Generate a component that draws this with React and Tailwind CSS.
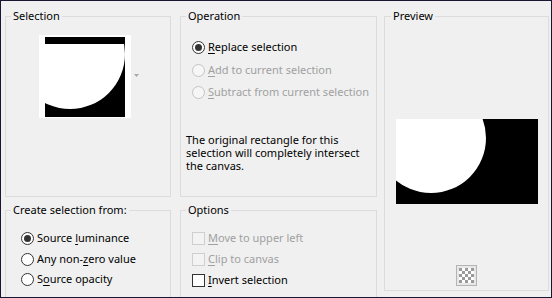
import React from 'react';

const font = { fontFamily: '"Noto Sans", "Open Sans", sans-serif' };

function Group({ label, className = '', legendClass = 'ml-[5px]', children }) {
  return (
    <fieldset className={`border border-[#dcdcdc] min-w-0 shrink-0 ${className}`}>
      <legend className={`${legendClass} px-[2px] h-[16px] leading-[16px] text-black`}>{label}</legend>
      {children}
    </fieldset>
  );
}

function Radio({ checked, disabled, children, className = '' }) {
  return (
    <div className={`flex items-center h-[16px] whitespace-nowrap ${className}`}>
      <span
        className={`w-[13px] h-[13px] rounded-full border flex items-center justify-center shrink-0 ${
          disabled ? 'border-[#c4c4c4] bg-[#f6f6f6]' : 'border-[#333] bg-white'
        }`}
      >
        {checked && <span className="w-[7px] h-[7px] rounded-full bg-[#333]" />}
      </span>
      <span className={`ml-[3px] ${disabled ? 'text-[#a0a0a0]' : 'text-black'}`}>{children}</span>
    </div>
  );
}

function Check({ disabled, children, className = '' }) {
  return (
    <div className={`flex items-center h-[16px] whitespace-nowrap ${className}`}>
      <span
        className={`w-[13px] h-[13px] border shrink-0 ${
          disabled ? 'border-[#cfcfcf] bg-[#f3f3f3]' : 'border-[#333] bg-white'
        }`}
      />
      <span className={`ml-[3px] ${disabled ? 'text-[#a0a0a0]' : 'text-black'}`}>{children}</span>
    </div>
  );
}

const U = ({ children }) => <span className="underline underline-offset-[2px]">{children}</span>;

function Thumbnail() {
  return (
    <div className="flex items-center">
      <div className="bg-white pl-[6px] pr-[6px] pt-[2px] pb-[1px]">
        <svg width="80" height="80" viewBox="0 0 80 80" className="block">
          <rect width="80" height="80" fill="#000" />
          <circle cx="25" cy="17" r="55" fill="#fff" />
          <rect width="80" height="7" fill="#000" />
        </svg>
      </div>
      <svg width="5" height="3" viewBox="0 0 5 3" className="ml-[3px] mt-[-3px]">
        <path d="M0 0h5L2.5 3z" fill="#a8a8a8" />
      </svg>
    </div>
  );
}

function PreviewImage() {
  return (
    <svg width="142" height="85" viewBox="0 0 142 85" className="block">
      <rect width="142" height="85" fill="#000" />
      <circle cx="35" cy="19" r="55" fill="#fff" />
    </svg>
  );
}

function CheckerIcon() {
  const cells = [];
  for (let r = 0; r < 5; r++) {
    for (let c = 0; c < 5; c++) {
      if ((r + c) % 2 === 0) cells.push(<rect key={`${r}-${c}`} x={3 + c * 3} y={3 + r * 3} width="3" height="3" fill="#9a9a9a" />);
    }
  }
  return (
    <svg width="21" height="21" viewBox="0 0 21 21" className="block">
      <rect x="0.5" y="0.5" width="20" height="20" fill="#e8e8e8" stroke="#b4b4b4" />
      <rect x="3" y="3" width="15" height="15" fill="#fff" />
      {cells}
    </svg>
  );
}

export default function App() {
  return (
    <div
      className="w-[552px] h-[298px] overflow-hidden border border-[#1b1535] bg-[#f0f0f0] text-[11px] flex items-start pl-[4px] pt-[7px]"
      style={font}
    >
      <div className="w-[166px] flex flex-col shrink-0">
        <Group label="Selection" className="h-[189px]">
          <div className="pl-[33px] pt-[11px]">
            <Thumbnail />
          </div>
        </Group>
        <Group label="Create selection from:" className="mt-[5px] h-[120px]">
          <div className="pl-[15px] pt-[12px]">
            <Radio checked>Source <U>l</U>uminance</Radio>
            <Radio className="mt-[5px]">Any non-<U>z</U>ero value</Radio>
            <Radio className="mt-[4px]">S<U>o</U>urce opacity</Radio>
          </div>
        </Group>
      </div>

      <div className="w-[197px] ml-[9px] flex flex-col shrink-0">
        <Group label="Operation" className="h-[189px]">
          <div className="pl-[11px] pt-[15px]">
            <Radio checked><U>R</U>eplace selection</Radio>
            <Radio disabled className="mt-[7px]"><U>A</U>dd to current selection</Radio>
            <Radio disabled className="mt-[6px]"><U>S</U>ubtract from current selection</Radio>
          </div>
          <p className="pl-[5px] mt-[33px] leading-[13px] text-black whitespace-nowrap">
            The original rectangle for this
            <br />
            selection will completely intersect
            <br />
            the canvas.
          </p>
        </Group>
        <Group label="Options" className="mt-[5px] h-[120px]">
          <div className="pl-[11px] pt-[12px]">
            <Check disabled><U>M</U>ove to upper left</Check>
            <Check disabled className="mt-[5px]"><U>C</U>lip to canvas</Check>
            <Check className="mt-[5px]"><U>I</U>nvert selection</Check>
          </div>
        </Group>
      </div>

      <div className="w-[165px] ml-[7px] shrink-0">
        <Group label="Preview" legendClass="ml-[6px]" className="h-[283px]">
          <div className="pl-[11px] pt-[95px]">
            <PreviewImage />
          </div>
          <div className="pl-[71px] pt-[61px]">
            <CheckerIcon />
          </div>
        </Group>
      </div>
    </div>
  );
}
